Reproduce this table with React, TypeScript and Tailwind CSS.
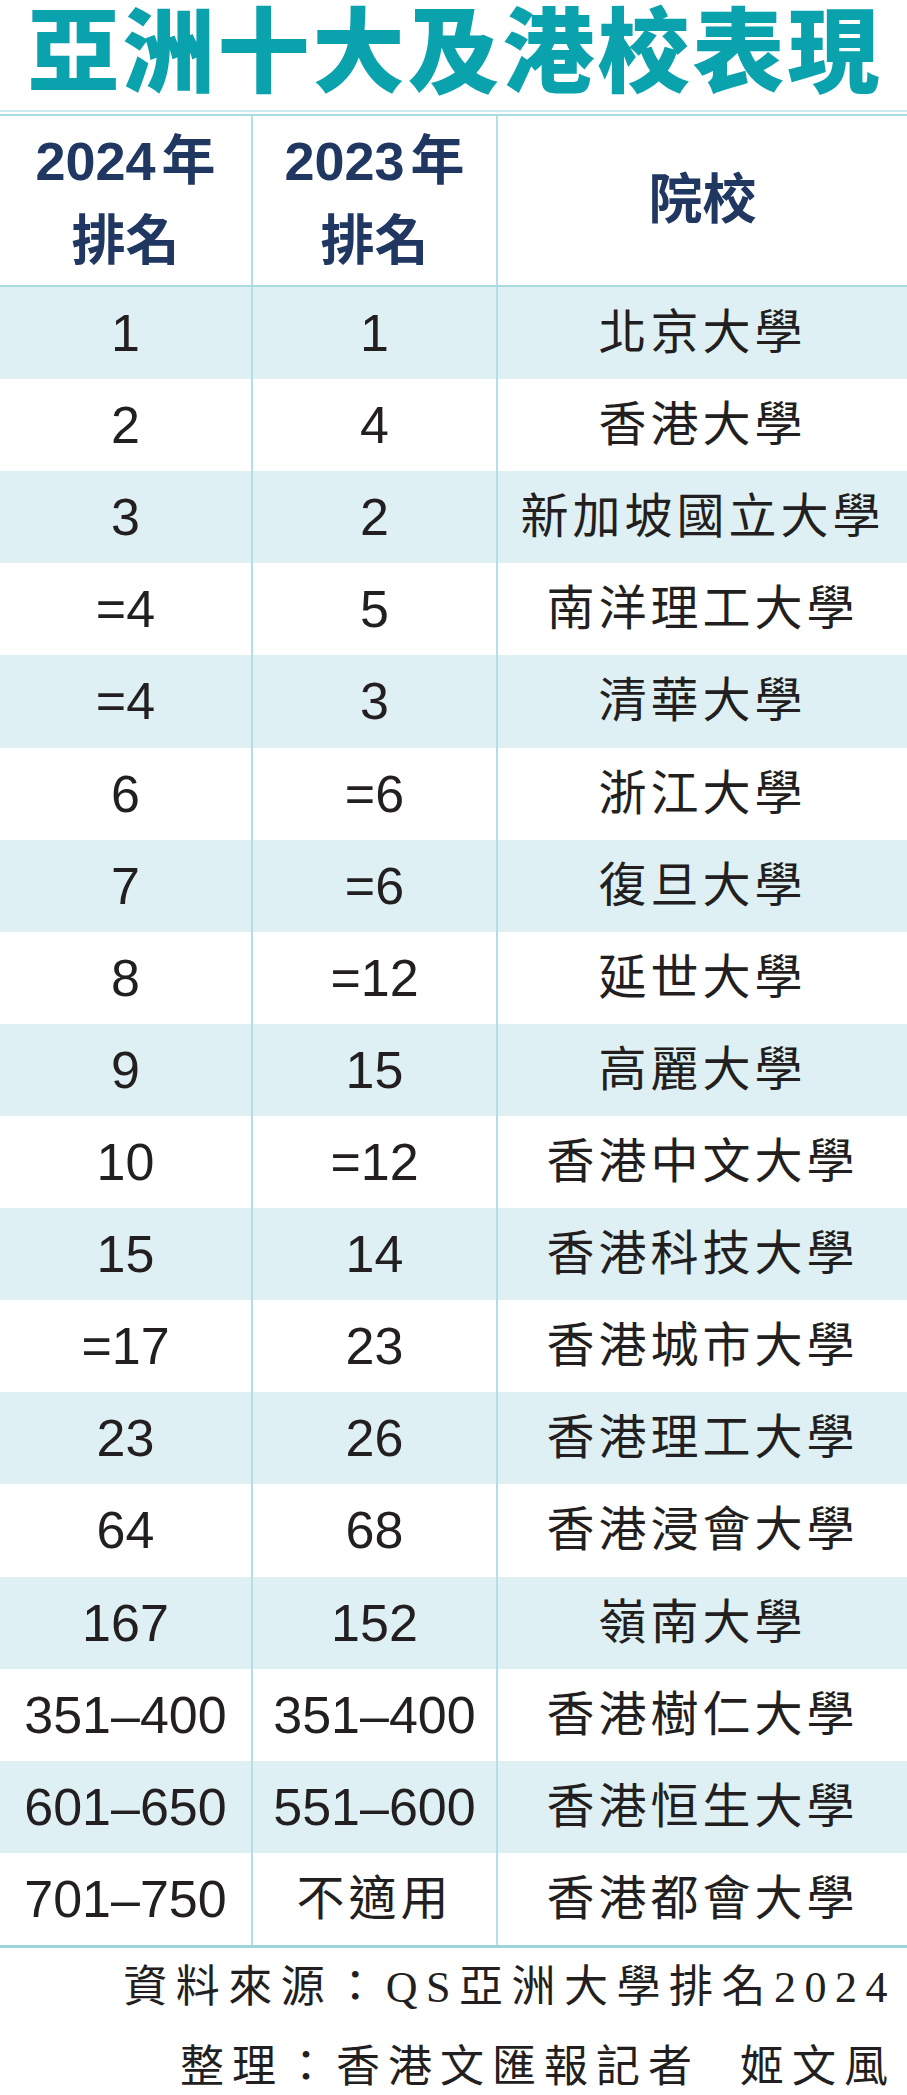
import React from "react";

type Row = { y2024: string; y2023: string; school: string };

const rows: Row[] = [
  { y2024: "1", y2023: "1", school: "北京大學" },
  { y2024: "2", y2023: "4", school: "香港大學" },
  { y2024: "3", y2023: "2", school: "新加坡國立大學" },
  { y2024: "=4", y2023: "5", school: "南洋理工大學" },
  { y2024: "=4", y2023: "3", school: "清華大學" },
  { y2024: "6", y2023: "=6", school: "浙江大學" },
  { y2024: "7", y2023: "=6", school: "復旦大學" },
  { y2024: "8", y2023: "=12", school: "延世大學" },
  { y2024: "9", y2023: "15", school: "高麗大學" },
  { y2024: "10", y2023: "=12", school: "香港中文大學" },
  { y2024: "15", y2023: "14", school: "香港科技大學" },
  { y2024: "=17", y2023: "23", school: "香港城市大學" },
  { y2024: "23", y2023: "26", school: "香港理工大學" },
  { y2024: "64", y2023: "68", school: "香港浸會大學" },
  { y2024: "167", y2023: "152", school: "嶺南大學" },
  { y2024: "351–400", y2023: "351–400", school: "香港樹仁大學" },
  { y2024: "601–650", y2023: "551–600", school: "香港恒生大學" },
  { y2024: "701–750", y2023: "不適用", school: "香港都會大學" },
];

const sans = "font-['Liberation_Sans','Noto_Sans_CJK_TC',sans-serif]";

export default function App() {
  return (
    <div className="h-[2095px] w-[907px] overflow-hidden bg-white">
      {/* title */}
      <div className="flex h-[110px] items-start justify-center">
        <h1 className="whitespace-nowrap pl-[3px] font-['Noto_Sans_CJK_TC',sans-serif] text-[92px] font-black leading-[90px] tracking-[3px] text-[#0aa2ac]">
          亞洲十大及港校表現
        </h1>
      </div>

      <div className="h-[2px] bg-[#cbeaee]" />
      <div className="h-[2px] bg-white" />
      <div className="h-[2px] bg-[#a9dbe1]" />

      {/* header */}
      <div className={`grid h-[169px] grid-cols-[253px_245px_1fr] ${sans} font-bold text-[#1f3761]`}>
        <div className="flex flex-col items-center justify-center border-r-2 border-[#b4e0e5] text-[54px] leading-[80px]">
          <span>2024<span className="ml-[6px]">年</span></span>
          <span>排名</span>
        </div>
        <div className="flex flex-col items-center justify-center border-r-2 border-[#b4e0e5] text-[54px] leading-[80px]">
          <span>2023<span className="ml-[6px]">年</span></span>
          <span>排名</span>
        </div>
        <div className="flex items-center justify-center text-[54px]">院校</div>
      </div>

      <div className="h-[2px] bg-[#a9dbe1]" />

      {/* body */}
      <div className={`flex h-[1658px] flex-col ${sans} text-[52px] text-[#231f20]`}>
        {rows.map((r, i) => (
          <div
            key={r.school}
            className={`grid flex-1 grid-cols-[253px_245px_1fr] ${i % 2 === 0 ? "bg-[#dff0f4]" : "bg-white"}`}
          >
            <div className="flex items-center justify-center border-r-2 border-[#b4e0e5]">{r.y2024}</div>
            <div className="flex items-center justify-center border-r-2 border-[#b4e0e5]">
              {r.y2023 === "不適用" ? <span className="text-[48px] tracking-[4px]">{r.y2023}</span> : r.y2023}
            </div>
            <div className="flex items-center justify-center text-[48px] tracking-[4px]">{r.school}</div>
          </div>
        ))}
      </div>

      <div className="h-[3px] bg-[#9fd5d8]" />

      {/* source */}
      <div className="flex flex-col items-end pr-[11px] font-['Liberation_Serif','Noto_Sans_CJK_TC',serif] text-[44px] leading-[80px] tracking-[8px] text-[#231f20]">
        <p className="whitespace-nowrap tracking-[8.5px]">資料來源：QS亞洲大學排名2024</p>
        <p className="whitespace-nowrap">
          整理：香港文匯報記者<span className="inline-block w-[40px]" />姬文風
        </p>
      </div>
    </div>
  );
}
